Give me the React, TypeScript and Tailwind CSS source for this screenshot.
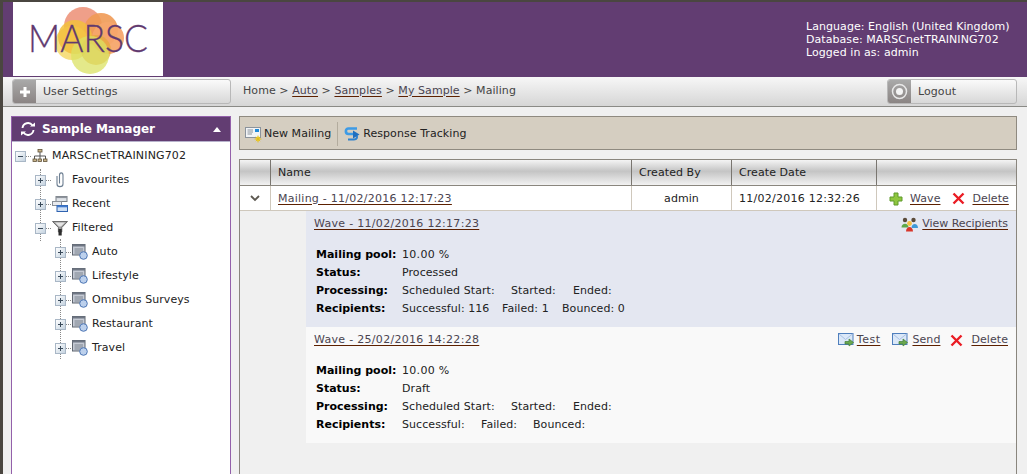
import React from "react";

const PlusBox = ({ minus = false }: { minus?: boolean }) => (
  <span className="flex w-[11px] h-[11px] items-center justify-center border border-[#a9b7c6] bg-gradient-to-br from-[#ffffff] to-[#c5d3e0] shrink-0">
    <svg width="9" height="9" viewBox="0 0 9 9">
      <path d={minus ? "M2 4.5H7" : "M2 4.5H7M4.5 2V7"} stroke="#3a4a5a" strokeWidth="1" />
    </svg>
  </span>
);

const ServerIcon = () => (
  <svg width="16" height="16" viewBox="0 0 16 16" className="shrink-0">
    <rect x="6" y="1.5" width="4" height="2.5" fill="#c9b48a" stroke="#5f5238" strokeWidth="0.8" />
    <path d="M8 4V8M2.5 11V8H13.5V11M8 8V11" fill="none" stroke="#555" strokeWidth="1" />
    <rect x="1" y="11" width="3.5" height="2.5" fill="#c9b48a" stroke="#5f5238" strokeWidth="0.8" />
    <rect x="6" y="11" width="3.5" height="2.5" fill="#c9b48a" stroke="#5f5238" strokeWidth="0.8" />
    <rect x="11.5" y="11" width="3.5" height="2.5" fill="#c9b48a" stroke="#5f5238" strokeWidth="0.8" />
  </svg>
);

const ClipIcon = () => (
  <svg width="16" height="16" viewBox="0 0 16 16" className="shrink-0">
    <path d="M5 4V12C5 15.5 11 15.5 11 12V3.5C11 0 7.5 0 7.5 3.5V11.5" fill="none" stroke="#6d7f92" strokeWidth="1.1" />
  </svg>
);

const RecentIcon = () => (
  <svg width="16" height="16" viewBox="0 0 16 16" className="shrink-0">
    <rect x="4" y="0.5" width="11" height="5" fill="#dfe3e8" stroke="#7a8088" />
    <rect x="4" y="0.5" width="11" height="1.6" fill="#8d939b" />
    <rect x="0.5" y="5.5" width="9" height="4" fill="#e8eaee" stroke="#8a9098" />
    <rect x="5" y="9.5" width="10.5" height="6" fill="#cfe0f5" stroke="#2f62b0" />
    <rect x="5" y="9.5" width="10.5" height="1.8" fill="#3f78cc" />
  </svg>
);

const FilterIcon = () => (
  <svg width="16" height="16" viewBox="0 0 16 16" className="shrink-0">
    <path d="M0.5 1.5H15.5L9.8 7.5V12H6.4V7.5Z" fill="#9c9c9c" stroke="#555" strokeWidth="0.8" />
    <path d="M3 2.5H13L9 6.5H7Z" fill="#e4e4e4" />
    <rect x="6.5" y="9" width="3.2" height="6.5" fill="#2c2c2c" />
  </svg>
);

const SampleIcon = () => (
  <svg width="16" height="16" viewBox="0 0 16 16" className="shrink-0">
    <rect x="0.5" y="0.5" width="12.5" height="10.5" fill="#c5cad4" stroke="#5f6670" />
    <rect x="0.5" y="0.5" width="12.5" height="2" fill="#6f7683" />
    <path d="M2.5 5H11M2.5 7H11M2.5 9H8" stroke="#7d8590" strokeWidth="1" />
    <circle cx="11.5" cy="11.5" r="3.8" fill="#bcd0ec" stroke="#4d76b4" />
  </svg>
);

const NewMailIcon = () => (
  <svg width="17" height="17" viewBox="0 0 17 17" className="shrink-0">
    <rect x="0.5" y="1.5" width="15" height="10" fill="#f2f4f6" stroke="#8b939c" />
    <rect x="10" y="3" width="4" height="3" fill="#1f8ad8" />
    <path d="M2.5 4H8M2.5 6H8M2.5 8H7" stroke="#8b939c" strokeWidth="1" />
    <circle cx="13" cy="13" r="2.4" fill="#f1d33a" />
    <path d="M13 9.5V16.5M9.5 13H16.5M10.8 10.8L15.2 15.2M15.2 10.8L10.8 15.2" stroke="#e0bb20" strokeWidth="0.8" />
  </svg>
);

const TrackIcon = () => (
  <svg width="17" height="17" viewBox="0 0 17 17" className="shrink-0">
    <path d="M13 2.5H4.5C1 2.5 1 8 4.5 8H10" fill="none" stroke="#3d9be6" strokeWidth="2.6" />
    <path d="M4 13.5H10C13 13.5 13.5 11 12.5 10" fill="none" stroke="#2f82cf" strokeWidth="2.2" />
    <path d="M9 4.5L15.5 8.5L9 12.5Z" fill="#1f6fc0" />
  </svg>
);

const PlusGreen = () => (
  <svg width="14" height="14" viewBox="0 0 14 14" className="shrink-0">
    <path d="M5 1H9V5H13V9H9V13H5V9H1V5H5Z" fill="#8fc63f" stroke="#5f9a2a" strokeWidth="1" />
  </svg>
);

const RedX = () => (
  <svg width="13" height="13" viewBox="0 0 13 13" className="shrink-0">
    <path d="M1.5 1.5L11.5 11.5M11.5 1.5L1.5 11.5" stroke="#ea1c24" strokeWidth="2.4" />
  </svg>
);

const PeopleIcon = () => (
  <svg width="17" height="15" viewBox="0 0 17 15" className="shrink-0">
    <circle cx="4" cy="3" r="2.2" fill="#5a4a3a" />
    <circle cx="12.5" cy="3" r="2.2" fill="#5a4a3a" />
    <path d="M0.5 10.5C0.5 5.5 7.5 5.5 7.5 10.5Z" fill="#5fa84a" />
    <path d="M10.5 11C10.5 5.5 17 5.5 17 11Z" fill="#3f9ad8" />
    <circle cx="8.5" cy="6.5" r="2.4" fill="#f4c040" />
    <path d="M5 14.5C5 8.5 12 8.5 12 14.5Z" fill="#d8362a" />
  </svg>
);

const MailSend = () => (
  <svg width="16" height="14" viewBox="0 0 16 14" className="shrink-0">
    <rect x="0.5" y="0.5" width="14.5" height="11" fill="#dbe8f8" stroke="#4f7fbd" />
    <path d="M1 1L7.5 6.5L14.5 1" fill="none" stroke="#a9c2e4" strokeWidth="1" />
    <path d="M7 8.5H11V6L15.5 9.5L11 13V11H7Z" fill="#6aa84f" stroke="#44803a" strokeWidth="0.7" />
  </svg>
);

const Logo = () => (
  <svg width="150" height="74" viewBox="0 0 150 74">
    <circle cx="70" cy="24" r="19" fill="#ee9a83" opacity="0.95" />
    <circle cx="88" cy="28" r="17" fill="#f09a55" opacity="0.9" />
    <circle cx="95" cy="36" r="16" fill="#f5a76b" opacity="0.95" />
    <circle cx="59" cy="41" r="17" fill="#f6dc72" opacity="0.9" />
    <circle cx="62" cy="35" r="17" fill="#f2bf3d" opacity="0.85" />
    <circle cx="83" cy="48" r="15" fill="#e5a83c" opacity="0.75" />
    <circle cx="77" cy="53" r="19" fill="#dbe263" opacity="0.75" />
    <text x="15" y="50" fontFamily="Lato, 'Open Sans', sans-serif" fontSize="38" fontWeight="300" fill="#61396f" stroke="#61396f" strokeWidth="0.3" textLength="120" lengthAdjust="spacingAndGlyphs">MARSC</text>
  </svg>
);

const Row = ({ icon, label, deep, minus }: { icon: React.ReactNode; label: string; deep?: boolean; minus?: boolean }) => (
  <div className={`h-6 flex items-center ${deep ? "pl-[43px]" : "pl-[23px]"}`}>
    <PlusBox minus={minus} />
    <span className="w-[5px] border-t border-dotted border-[#888]" />
    <span className="ml-[1px] w-[17px] flex">{icon}</span>
    <span className="ml-[3px] text-[#222]">{label}</span>
  </div>
);

const Lnk = ({ children, cls = "" }: { children: React.ReactNode; cls?: string }) => (
  <a className={`underline text-[#4a4450] decoration-[#5c2000] underline-offset-2 ${cls}`}>{children}</a>
);

const Wave = ({
  title, bg, status, rec, recW, right,
}: { title: string; bg: string; status: string; rec: string[]; recW: string[]; right: React.ReactNode }) => (
  <div className={`${bg} h-[116px] pl-2 pr-2 flex flex-col`}>
    <div className="flex justify-between items-center h-[26px]">
      <Lnk cls="tracking-[0.3px]">{title}</Lnk>
      <div className="flex items-center">{right}</div>
    </div>
    <div className="mt-[9px] pl-[2px] grid grid-cols-[86px_1fr] auto-rows-[18px] items-center text-[#222]">
      <b className="text-black tracking-normal">Mailing pool:</b><span className="tracking-[0.3px]">10.00 %</span>
      <b className="text-black tracking-normal">Status:</b><span>{status}</span>
      <b className="text-black tracking-normal">Processing:</b>
      <span className="flex"><span className="w-[109px]">Scheduled Start:</span><span className="w-[62px]">Started:</span><span>Ended:</span></span>
      <b className="text-black tracking-normal">Recipients:</b>
      <span className="flex">
        <span style={{ width: recW[0] }}>{rec[0]}</span>
        <span style={{ width: recW[1] }}>{rec[1]}</span>
        <span>{rec[2]}</span>
      </span>
    </div>
  </div>
);

export default function App() {
  return (
    <div className="w-[1027px] h-[474px] overflow-hidden bg-[#4a4640] pt-[2px] pl-[3px] text-[11px] leading-[14px] tracking-[0.07px] font-['DejaVu_Sans','Liberation_Sans',sans-serif] flex flex-col">
      <header className="h-[75px] bg-[#623d72] flex justify-between shrink-0">
        <div className="ml-[10px] bg-white w-[150px] h-[74px]"><Logo /></div>
        <div className="mr-[16px] mt-[18px] text-white leading-[13px] w-[205px] whitespace-nowrap tracking-[0.06px]">
          <div>Language: English (United Kingdom)</div>
          <div>Database: MARSCnetTRAINING702</div>
          <div>Logged in as: admin</div>
        </div>
      </header>
      <nav className="h-[30px] shrink-0 border-b border-[#8a8a86] bg-gradient-to-b from-[#f7f7f7] to-[#d6d6d6] flex items-center pl-[9px] pr-[10px] text-[#444]">
        <div className="w-[219px] h-[25px] rounded-[3px] border border-[#b8b8b8] bg-gradient-to-b from-[#fafafa] to-[#d8d8d8] flex items-center overflow-hidden">
          <span className="w-[23px] h-full flex items-center justify-center bg-gradient-to-b from-[#a9a9a9] to-[#8b8584]">
            <svg width="12" height="12" viewBox="0 0 12 12"><path d="M6 1V11M1 6H11" stroke="#fff" strokeWidth="3" /></svg>
          </span>
          <span className="ml-[7px]">User Settings</span>
        </div>
        <div className="ml-[12px] flex-1 whitespace-pre -mt-[2px] tracking-[0.07px]">
          Home &gt; <Lnk>Auto</Lnk> &gt; <Lnk>Samples</Lnk> &gt; <Lnk>My Sample</Lnk> &gt; Mailing
        </div>
        <div className="w-[130px] h-[25px] rounded-[3px] border border-[#b8b8b8] bg-gradient-to-b from-[#fafafa] to-[#d8d8d8] flex items-center overflow-hidden">
          <span className="w-[23px] h-full flex items-center justify-center bg-gradient-to-b from-[#a9a9a9] to-[#8b8584]">
            <svg width="17" height="17" viewBox="0 0 17 17"><circle cx="8.5" cy="8.5" r="7" fill="none" stroke="#e8e8e8" strokeWidth="1.5" /><circle cx="8.5" cy="8.5" r="3.5" fill="#f4f4f4" /></svg>
          </span>
          <span className="ml-[7px]">Logout</span>
        </div>
      </nav>
      <main className="flex-1 min-h-0 bg-[#f0f0f0] flex pl-[8px] pt-[9px] pr-[10px] gap-[8px]">
        <aside className="w-[220px] shrink-0 border-x border-t border-[#9360aa] bg-white flex flex-col">
          <div className="h-[25px] shrink-0 bg-[#623d72] border-b border-[#b7b2cc] flex items-center text-white">
            <svg width="16" height="16" viewBox="0 0 16 16" className="ml-[8px]">
              <path d="M2.5 7A5.5 5.5 0 0 1 12.5 4.5M13.5 9A5.5 5.5 0 0 1 3.5 11.5" fill="none" stroke="#fff" strokeWidth="1.9" />
              <path d="M10 5.5H15V1.5ZM6 10.5H1V14.5Z" fill="#fff" />
            </svg>
            <b className="ml-[6px] text-[12px] tracking-[-0.05px]">Sample Manager</b>
            <svg width="8" height="5" viewBox="0 0 8 5" className="ml-auto mr-[9px]"><path d="M0 5L4 0L8 5Z" fill="#fff" /></svg>
          </div>
          <div className="relative pt-[2px]">
            <div className="absolute left-[28px] top-[27px] h-[72px] border-l border-dotted border-[#888]" />
            <div className="absolute left-[48px] top-[97px] h-[120px] border-l border-dotted border-[#888]" />
            <div className="relative h-6 flex items-center pl-[3px]">
              <PlusBox minus />
              <span className="w-[5px] border-t border-dotted border-[#888]" />
              <span className="ml-[1px]"><ServerIcon /></span>
              <span className="ml-[4px] text-[#222] tracking-[0.15px]">MARSCnetTRAINING702</span>
            </div>
            <div className="relative">
              <Row icon={<ClipIcon />} label="Favourites" />
              <Row icon={<RecentIcon />} label="Recent" />
              <Row icon={<FilterIcon />} label="Filtered" minus />
              <Row deep icon={<SampleIcon />} label="Auto" />
              <Row deep icon={<SampleIcon />} label="Lifestyle" />
              <Row deep icon={<SampleIcon />} label="Omnibus Surveys" />
              <Row deep icon={<SampleIcon />} label="Restaurant" />
              <Row deep icon={<SampleIcon />} label="Travel" />
            </div>
          </div>
        </aside>
        <section className="flex-1 min-w-0 flex flex-col">
          <div className="h-[34px] shrink-0 border border-[#8f8a80] bg-[#d5cec1] flex items-center pl-[5px] pt-[2px] text-[#222]">
            <NewMailIcon />
            <span className="ml-[2px] tracking-[0.03px]">New Mailing</span>
            <span className="ml-[6px] mr-[6px] w-[1px] h-[24px] bg-[#b3ac9e]" />
            <TrackIcon />
            <span className="ml-[2px]">Response Tracking</span>
          </div>
          <div className="mt-[9px] flex-1 min-h-0 border-x border-t border-[#8a867e] flex flex-col text-[#222]">
            <div className="h-[26px] shrink-0 border-b border-[#8a867e] bg-[linear-gradient(#f4f4f4,#c4c4c4_45%,#f2f2f2)] flex items-center">
              <div className="w-[31px] h-full border-r border-[#7a7670]" />
              <div className="w-[361px] h-full border-r border-[#7a7670] pl-[7px] pt-[1px] flex items-center">Name</div>
              <div className="w-[100px] h-full border-r border-[#7a7670] pl-[7px] pt-[1px] flex items-center">Created By</div>
              <div className="w-[145px] h-full border-r border-[#7a7670] pl-[7px] pt-[1px] flex items-center">Create Date</div>
              <div className="flex-1" />
            </div>
            <div className="h-[25px] shrink-0 flex items-center bg-white border-b border-[#cfc8bc]">
              <div className="w-[31px] h-full border-r border-[#cfc8bc] flex items-center justify-center">
                <svg width="10" height="7" viewBox="0 0 10 7"><path d="M1 1L5 5L9 1" fill="none" stroke="#5c5850" strokeWidth="1.8" /></svg>
              </div>
              <div className="w-[361px] h-full border-r border-[#cfc8bc] pl-[7px] pt-[1px] flex items-center"><Lnk cls="tracking-[0.25px]">Mailing - 11/02/2016 12:17:23</Lnk></div>
              <div className="w-[100px] h-full border-r border-[#cfc8bc] pt-[1px] flex items-center justify-center">admin</div>
              <div className="w-[145px] h-full border-r border-[#cfc8bc] pl-[7px] pt-[1px] flex items-center tracking-[0.25px]">11/02/2016 12:32:26</div>
              <div className="flex-1 flex items-center pl-[12px] pt-[1px]">
                <PlusGreen /><span className="ml-[7px]"><Lnk>Wave</Lnk></span>
                <span className="ml-[12px]"><RedX /></span><span className="ml-[7px]"><Lnk cls="tracking-[0.03px]">Delete</Lnk></span>
              </div>
            </div>
            <div className="flex-1 min-h-0 bg-[#f0f0f0] pl-[66px]">
              <Wave
                bg="bg-[#e4e7f1]"
                title="Wave - 11/02/2016 12:17:23"
                status="Processed"
                rec={["Successful: 116", "Failed: 1", "Bounced: 0"]}
                recW={["100px", "60px"]}
                right={<><PeopleIcon /><span className="ml-[4px]"><Lnk cls="tracking-[-0.05px]">View Recipients</Lnk></span></>}
              />
              <Wave
                bg="bg-[#f9f9f9]"
                title="Wave - 25/02/2016 14:22:28"
                status="Draft"
                rec={["Successful:", "Failed:", "Bounced:"]}
                recW={["79px", "52px"]}
                right={<>
                  <MailSend /><span className="ml-[3px] tracking-[0.5px]"><Lnk>Test</Lnk></span>
                  <span className="ml-[12px]"><MailSend /></span><span className="ml-[4px]"><Lnk>Send</Lnk></span>
                  <span className="ml-[10px]"><RedX /></span><span className="ml-[8px]"><Lnk>Delete</Lnk></span>
                </>}
              />
            </div>
          </div>
        </section>
      </main>
    </div>
  );
}
